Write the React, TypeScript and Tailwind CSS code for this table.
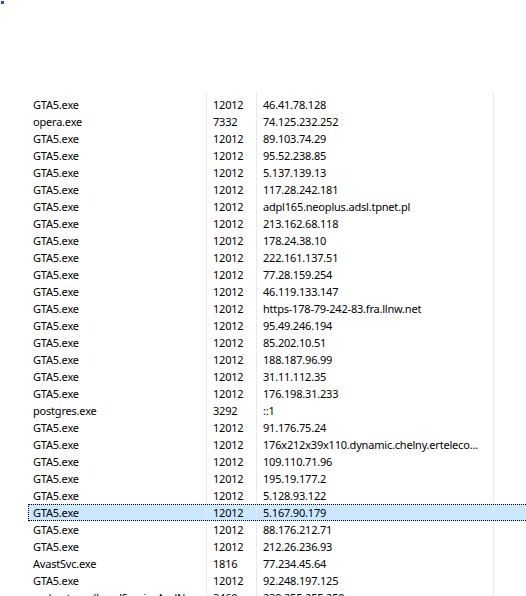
const rows: [string, string, string][] = [
  ['GTA5.exe', '12012', '46.41.78.128'],
  ['opera.exe', '7332', '74.125.232.252'],
  ['GTA5.exe', '12012', '89.103.74.29'],
  ['GTA5.exe', '12012', '95.52.238.85'],
  ['GTA5.exe', '12012', '5.137.139.13'],
  ['GTA5.exe', '12012', '117.28.242.181'],
  ['GTA5.exe', '12012', 'adpl165.neoplus.adsl.tpnet.pl'],
  ['GTA5.exe', '12012', '213.162.68.118'],
  ['GTA5.exe', '12012', '178.24.38.10'],
  ['GTA5.exe', '12012', '222.161.137.51'],
  ['GTA5.exe', '12012', '77.28.159.254'],
  ['GTA5.exe', '12012', '46.119.133.147'],
  ['GTA5.exe', '12012', 'https-178-79-242-83.fra.llnw.net'],
  ['GTA5.exe', '12012', '95.49.246.194'],
  ['GTA5.exe', '12012', '85.202.10.51'],
  ['GTA5.exe', '12012', '188.187.96.99'],
  ['GTA5.exe', '12012', '31.11.112.35'],
  ['GTA5.exe', '12012', '176.198.31.233'],
  ['postgres.exe', '3292', '::1'],
  ['GTA5.exe', '12012', '91.176.75.24'],
  ['GTA5.exe', '12012', '176x212x39x110.dynamic.chelny.erteleco...'],
  ['GTA5.exe', '12012', '109.110.71.96'],
  ['GTA5.exe', '12012', '195.19.177.2'],
  ['GTA5.exe', '12012', '5.128.93.122'],
  ['GTA5.exe', '12012', '5.167.90.179'],
  ['GTA5.exe', '12012', '88.176.212.71'],
  ['GTA5.exe', '12012', '212.26.236.93'],
  ['AvastSvc.exe', '1816', '77.234.45.64'],
  ['GTA5.exe', '12012', '92.248.197.125'],
  ['svchost.exe (LocalServiceAndN...', '3460', '239.255.255.250'],
];

const SELECTED = 24;

function Row({ cells, selected }: { cells: [string, string, string]; selected?: boolean }) {
  return (
    <div
      className={
        'flex h-[17px] shrink-0 ' +
        (selected ? 'bg-[#cce8ff] border-y border-l border-dotted border-black' : '')
      }
    >
      <div
        className={
          'shrink-0 border-r border-[#e5eaf1] flex items-center overflow-hidden whitespace-nowrap ' +
          (selected ? 'w-[178px] pl-[4px]' : 'w-[179px] pl-[5px]')
        }
      >
        {cells[0]}
      </div>
      <div className="w-[50px] shrink-0 pl-[6px] border-r border-[#e5eaf1] flex items-center">
        {cells[1]}
      </div>
      <div className="w-[237px] shrink-0 pl-[6px] border-r border-[#e5eaf1] flex items-center overflow-hidden whitespace-nowrap">
        {cells[2]}
      </div>
    </div>
  );
}

export default function App() {
  return (
    <div
      className="w-[526px] h-[596px] overflow-hidden bg-white text-[11px] text-black tracking-[-0.2px] leading-none"
      style={{ fontFamily: '"Noto Sans", "Segoe UI", sans-serif' }}
    >
      <div className="h-[92px] pt-[1px] pl-[1px]">
        <div className="w-[3px] h-[3px] bg-[#3b3bff]" />
      </div>

      <div className="ml-[28px] flex flex-col">
        {/* gap above first row, column lines run through it */}
        <div className="flex h-[4px]">
          <div className="w-[179px] border-r border-[#e5eaf1]" />
          <div className="w-[50px] border-r border-[#e5eaf1]" />
          <div className="w-[237px] border-r border-[#e5eaf1]" />
        </div>
        {rows.map((r, i) => (
          <Row key={i} cells={r} selected={i === SELECTED} />
        ))}
      </div>
    </div>
  );
}
